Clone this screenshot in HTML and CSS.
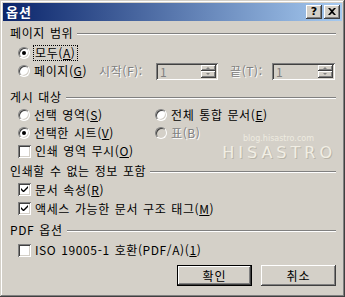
FILE: index.html
```html
<!DOCTYPE html>
<html lang="ko">
<head>
  <meta charset="UTF-8">
  <title>옵션</title>
  <link rel="stylesheet" href="styles.css">
</head>
<body>
  <div class="window">
    <div class="titlebar">
      <span class="title">옵션</span>
      <div class="title-buttons">
        <span class="tbtn help">?</span>
        <span class="tbtn close">
          <svg width="8" height="7" viewBox="0 0 8 7"><path d="M0 0h2l2 2 2-2h2L5 3.5 8 7H6L4 5 2 7H0l3-3.5z" fill="#000"/></svg>
        </span>
      </div>
    </div>

    <div class="content">
      <div class="group">
        <div class="legend"><span>페이지 범위</span><i class="etch"></i></div>
        <div class="row first">
          <label class="opt"><span class="radio checked"></span><span class="focus">모두(<u>A</u>)</span></label>
        </div>
        <div class="row">
          <label class="opt w-page"><span class="radio"></span><span>페이지(<u>G</u>)</span></label>
          <span class="dis w-from">시작(F):</span>
          <span class="spin w-spin1"><span class="val">1</span><span class="arrows"><i class="up"></i><i class="down"></i></span></span>
          <span class="dis w-to">끝(T):</span>
          <span class="spin w-spin2"><span class="val">1</span><span class="arrows"><i class="up"></i><i class="down"></i></span></span>
        </div>
      </div>

      <div class="group g2">
        <div class="legend"><span>게시 대상</span><i class="etch"></i></div>
        <div class="row">
          <label class="opt col1"><span class="radio"></span><span>선택 영역(<u>S</u>)</span></label>
          <label class="opt"><span class="radio"></span><span>전체 통합 문서(<u>E</u>)</span></label>
        </div>
        <div class="row">
          <label class="opt col1"><span class="radio checked"></span><span>선택한 시트(<u>V</u>)</span></label>
          <label class="opt"><span class="radio disabled"></span><span class="dis">표(B)</span></label>
        </div>
        <div class="row">
          <label class="opt"><span class="check"></span><span>인쇄 영역 무시(<u>O</u>)</span></label>
        </div>
      </div>

      <div class="group g3">
        <div class="legend"><span>인쇄할 수 없는 정보 포함</span><i class="etch"></i></div>
        <div class="row tall">
          <label class="opt"><span class="check checked"><svg width="9" height="9" viewBox="0 0 9 9"><path d="M1 3v2l2 2h1l4-4V1L3.5 5.5z" fill="#000"/></svg></span><span>문서 속성(<u>R</u>)</span></label>
        </div>
        <div class="row tall">
          <label class="opt"><span class="check checked"><svg width="9" height="9" viewBox="0 0 9 9"><path d="M1 3v2l2 2h1l4-4V1L3.5 5.5z" fill="#000"/></svg></span><span>액세스 가능한 문서 구조 태그(<u>M</u>)</span></label>
        </div>
      </div>

      <div class="group g4">
        <div class="legend"><span>PDF 옵션</span><i class="etch"></i></div>
        <div class="row first">
          <label class="opt"><span class="check"></span><span>ISO 19005-1 호환(PDF/A)(<u>1</u>)</span></label>
        </div>
      </div>

      <div class="actions">
        <button class="btn default">확인</button>
        <button class="btn">취소</button>
      </div>
    </div>

    <div class="watermark">
      <span class="wm-url">blog.hisastro.com</span>
      <span class="wm-name">HISASTRO</span>
    </div>
  </div>
</body>
</html>
```

FILE: styles.css
```css
body { margin: 0; background: #d4d0c8; font-family: "Noto Sans CJK KR", "Noto Sans", sans-serif; font-size: 12px; color: #000; }
.window { position: relative; width: 345px; height: 297px; box-sizing: border-box; padding: 3px; background: #d4d0c8; box-shadow: inset -1px -1px #404040, inset 1px 1px #d4d0c8, inset -2px -2px #808080, inset 2px 2px #fff; overflow: hidden; }

.titlebar { height: 18px; display: flex; align-items: center; justify-content: space-between; background: linear-gradient(to right, #0a246a, #a6caf0); padding: 0 2px 0 3px; }
.title { color: #fff; font-weight: 700; font-size: 13px; line-height: 14px; letter-spacing: 1px; }
.title-buttons { display: flex; gap: 2px; }
.tbtn { width: 16px; height: 14px; box-sizing: border-box; background: #d4d0c8; box-shadow: inset -1px -1px #404040, inset 1px 1px #fff, inset -2px -2px #808080; display: flex; align-items: center; justify-content: center; font-family: "DejaVu Sans", sans-serif; font-weight: 700; font-size: 11px; line-height: 1; padding-bottom: 1px; }

.content { padding: 3px 6px 0 7px; }
.legend { height: 18px; display: flex; align-items: center; line-height: 14px; letter-spacing: 0.6px; word-spacing: 1px; }
.etch { flex: 1; height: 0; border-top: 1px solid #808080; border-bottom: 1px solid #fff; margin: 1px 0 0 4px; }

.g2 { margin-top: 8px; }
.g3 { margin-top: 2px; }
.g4 { margin-top: 3px; }

.row { height: 18px; display: flex; align-items: center; line-height: 14px; letter-spacing: 0.6px; word-spacing: 1px; }
.row.first { margin-top: 2px; }
.row.tall { height: 19px; }
.opt { display: flex; align-items: center; gap: 4px; padding-left: 8px; }
.col1 { width: 129px; }
.w-page { width: 81px; }
.w-from { width: 57px; }
.w-to { width: 42px; margin-left: 12px; }
.w-spin1 { width: 62px; }
.w-spin2 { width: 63px; }

.dis { color: #808080; text-shadow: 1px 1px 0 #fff; }
.focus { outline: 1px dotted #000; outline-offset: 0; padding: 0 1px; }

.radio { width: 12px; height: 12px; box-sizing: border-box; border-radius: 50%; background: #fff; border: 1px solid; border-color: #808080 #fff #fff #808080; box-shadow: inset 1px 1px #404040, inset -1px -1px #d4d0c8; position: relative; flex: none; }
.radio.checked::after { content: ""; position: absolute; left: 3px; top: 3px; width: 4px; height: 4px; border-radius: 50%; background: #000; }
.radio.disabled { background: #d4d0c8; }

.check { width: 13px; height: 13px; box-sizing: border-box; background: #fff; box-shadow: inset 1px 1px #808080, inset -1px -1px #fff, inset 2px 2px #404040, inset -2px -2px #d4d0c8; display: flex; align-items: center; justify-content: center; flex: none; }
.check svg { display: block; }

.spin { height: 17px; box-sizing: border-box; background: #d4d0c8; box-shadow: inset 1px 1px #808080, inset -1px -1px #fff, inset 2px 2px #404040, inset -2px -2px #d4d0c8; display: flex; align-items: center; justify-content: space-between; padding: 2px; }
.spin .val { color: #808080; padding-left: 2px; line-height: 13px; }
.arrows { width: 15px; height: 13px; display: flex; flex-direction: column; }
.arrows i { flex: 1; background: #d4d0c8; box-shadow: inset -1px -1px #404040, inset 1px 1px #fff, inset -2px -2px #808080; position: relative; }
.arrows i::after { content: ""; position: absolute; left: 5px; width: 0; height: 0; border-left: 2px solid transparent; border-right: 2px solid transparent; }
.arrows .up::after { top: 2px; border-bottom: 2px solid #808080; }
.arrows .down::after { top: 2px; border-top: 2px solid #808080; }

.actions { display: flex; justify-content: flex-end; gap: 9px; margin-top: 6px; }
.btn { width: 75px; height: 21px; box-sizing: border-box; border: none; background: #d4d0c8; font-family: inherit; font-size: 12px; letter-spacing: 1px; color: #000; padding: 0; box-shadow: inset -1px -1px #404040, inset 1px 1px #fff, inset -2px -2px #808080, inset 2px 2px #d4d0c8; }
.btn.default { border: 1px solid #000; }

.watermark { position: absolute; left: 212px; top: 134px; display: flex; flex-direction: column; align-items: flex-end; width: 124px; pointer-events: none; }
.wm-url { font-family: "DejaVu Sans", sans-serif; font-size: 8px; color: #eeebe0; margin-right: 22px; }
.wm-name { font-family: "DejaVu Sans", sans-serif; font-size: 16px; line-height: 17px; letter-spacing: 4px; color: #f1eee4; text-shadow: 1px 1px 0 #b9b5a9; margin-top: 1px; }
```
